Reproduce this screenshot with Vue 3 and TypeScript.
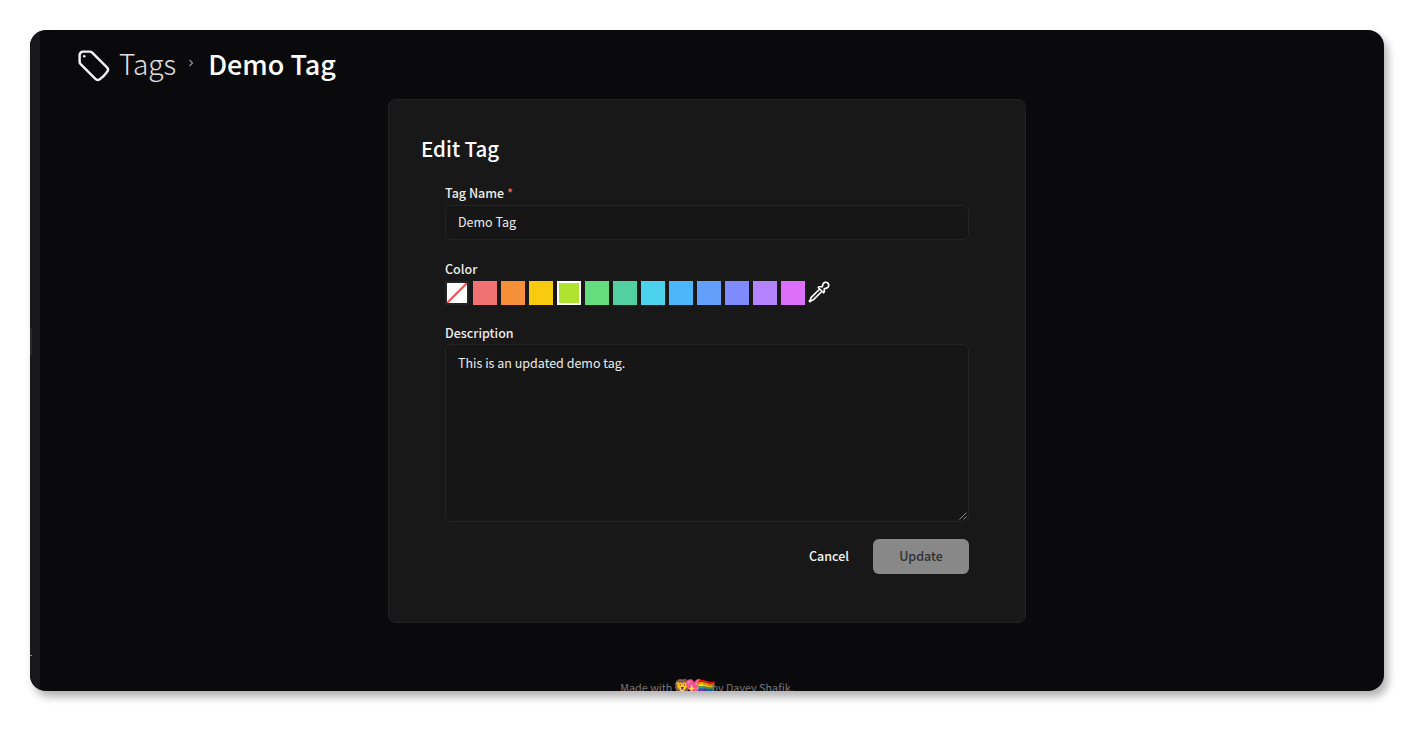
<template>
  <div class="page">
    <div class="window">
      <aside class="rail"></aside>
      <span class="rail-handle"></span>
      <span class="rail-tick"></span>
      <main class="main">
        <header class="crumbs">
          <svg class="tag-icon" viewBox="0 0 24 24" fill="none" stroke="currentColor" stroke-width="1.600" stroke-linecap="round" stroke-linejoin="round">
            <path d="M9.568 3H5.250A2.250 2.250 0 0 0 3 5.250v4.318c0 .597.237 1.170.659 1.591l9.581 9.581c.699.699 1.780.872 2.607.330a18.095 18.095 0 0 0 5.223-5.223c.542-.827.369-1.908-.330-2.607L11.160 3.660A2.250 2.250 0 0 0 9.568 3Z" />
            <path d="M6 6h.008v.008H6V6Z" />
          </svg>
          <span class="crumb-parent">Tags</span>
          <svg class="crumb-sep" viewBox="0 0 8 10" fill="none" stroke="currentColor" stroke-width="1.100">
            <path d="M2.500 2l3 3-3 3" />
          </svg>
          <span class="crumb-current">Demo Tag</span>
        </header>

        <section class="card">
          <h2 class="card-title">Edit Tag</h2>
          <form class="form" @submit.prevent>
            <div class="field name-field">
              <label class="label">Tag Name<span class="req"> *</span></label>
              <div class="input">{{ name }}</div>
            </div>

            <div class="field color-field">
              <label class="label">Color</label>
              <div class="swatches">
                <span class="swatch none">
                  <svg viewBox="0 0 20 20" preserveAspectRatio="none">
                    <rect width="20" height="20" fill="#fff" />
                    <path d="M0 20L20 0" stroke="#ef5050" stroke-width="2" />
                  </svg>
                </span>
                <span
                  v-for="c in colors"
                  :key="c"
                  class="swatch"
                  :class="{ selected: c === selected }"
                  :style="{ background: c }"
                ></span>
                <svg class="dropper" viewBox="0 0 24 24" fill="none" stroke="#fff" stroke-width="1.700" stroke-linecap="round" stroke-linejoin="round">
                  <path d="m15 11.250 1.500 1.500.750-.750V8.758l2.276-.610a3 3 0 1 0-3.675-3.675l-.610 2.277H12l-.750.750 1.500 1.500m2.250 2.250-8.470 8.470c-.340.340-.800.530-1.280.530s-.940.190-1.280.530l-.970.970-.750-.750.970-.970c.340-.340.530-.800.530-1.280s.190-.940.530-1.280L12.750 9M15 11.250 12.750 9" />
                </svg>
              </div>
            </div>

            <div class="field desc-field">
              <label class="label">Description</label>
              <div class="textarea">
                {{ description }}
                <svg class="grip" viewBox="0 0 8 8" stroke="#8a8a8a" stroke-width="1">
                  <path d="M0.500 7.500L7.500 0.500M4.500 7.500L7.500 4.500" />
                </svg>
              </div>
            </div>

            <div class="actions">
              <button type="button" class="cancel">Cancel</button>
              <button type="submit" class="update">Update</button>
            </div>
          </form>
        </section>

        <footer class="foot">
          Made with
          <span class="emoji">🦁💖🏳️‍🌈</span>
          by Davey Shafik.
        </footer>
      </main>
    </div>
  </div>
</template>

<script setup lang="ts">
const name = 'Demo Tag';
const description = 'This is an updated demo tag.';
const selected = '#aee32f';
const colors: string[] = [
  '#f27171',
  '#f59038',
  '#f8cb10',
  '#aee32f',
  '#65dd7f',
  '#53d0a0',
  '#4dd2ee',
  '#4cb6fa',
  '#659ffc',
  '#7f8afc',
  '#b382fd',
  '#dc70fa',
];
</script>

<style>
html,
body {
  margin: 0;
  background: #fff;
}
</style>

<style scoped>
.page {
  box-sizing: border-box;
  width: 1426px;
  height: 733px;
  padding: 30px 42px 42px 30px;
  font-family: "Noto Sans CJK JP", "Noto Sans", sans-serif;
  overflow: hidden;
}

.window {
  position: relative;
  display: flex;
  height: 661px;
  background: #0a0a0c;
  border-radius: 16px;
  overflow: hidden;
  box-shadow: 4px 6px 8px rgba(0, 0, 0, 0.3);
}

.rail {
  flex: none;
  width: 10px;
  background: #18181a;
}

.rail-handle {
  position: absolute;
  left: 0;
  top: 298px;
  width: 2px;
  height: 27px;
  background: #2a2a2c;
}

.rail-tick {
  position: absolute;
  left: 0;
  top: 625px;
  width: 2px;
  height: 1px;
  background: #8a8a8a;
}

.main {
  flex: 1;
  display: flex;
  flex-direction: column;
  min-width: 0;
  padding-right: 10px;
}

.crumbs {
  flex: none;
  display: flex;
  align-items: center;
  height: 69px;
  padding-left: 35px;
  padding-bottom: 3px;
  box-sizing: border-box;
  color: #fff;
}

.tag-icon {
  flex: none;
  width: 37px;
  height: 37px;
  margin-top: 4px;
  color: #f2f2f2;
}

.crumb-parent {
  margin-left: 7px;
  font-size: 28px;
  font-weight: 300;
  color: #e0e0e0;
}

.crumb-sep {
  width: 8px;
  height: 10px;
  margin: 0 13px 0 11px;
  color: #999;
}

.crumb-current {
  font-size: 27px;
  font-weight: 500;
}

.card {
  flex: none;
  box-sizing: border-box;
  align-self: center;
  width: 638px;
  height: 524px;
  padding: 30px 56px 0 32px;
  background: #181818;
  border: 1px solid #232323;
  border-radius: 8px;
  color: #f4f4f4;
}

.card-title {
  margin: 0;
  font-size: 20.500px;
  line-height: 36px;
  font-weight: 500;
  color: #fff;
}

.form {
  padding: 17px 0 0 24px;
}

.field {
  display: flex;
  flex-direction: column;
}

.label {
  margin-bottom: 2px;
  font-size: 12.500px;
  line-height: 20px;
  font-weight: 500;
  color: #ededed;
}

.req {
  color: #ef5f5f;
}

.input,
.textarea {
  box-sizing: border-box;
  position: relative;
  width: 524px;
  padding: 0 12px;
  background: #161616;
  border: 1px solid #242424;
  border-radius: 6px;
  font-size: 12.500px;
  color: #ededed;
}

.input {
  height: 35px;
  line-height: 32px;
}

.color-field {
  margin-top: 19px;
}

.swatches {
  display: flex;
  align-items: center;
  gap: 4px;
  height: 24px;
}

.swatch {
  box-sizing: border-box;
  flex: none;
  width: 24px;
  height: 24px;
  border: 2px solid transparent;
  background-clip: border-box;
}

.swatch.none {
  border-color: #242424;
}

.swatch.none svg {
  display: block;
  width: 100%;
  height: 100%;
}

.swatch.selected {
  border-color: #fff;
}

.dropper {
  flex: none;
  width: 24px;
  height: 24px;
  margin: -3px 0 0 -2px;
}

.desc-field {
  margin-top: 18px;
}

.desc-field .label {
  margin-bottom: 1px;
}

.textarea {
  height: 178px;
  padding-top: 7px;
  line-height: 22px;
}

.grip {
  position: absolute;
  right: 1px;
  bottom: 1px;
  width: 8px;
  height: 8px;
}

.actions {
  display: flex;
  justify-content: flex-end;
  align-items: center;
  gap: 24px;
  width: 524px;
  margin-top: 17px;
}

.cancel,
.update {
  height: 35px;
  padding: 0 0 2px;
  border: none;
  font-family: inherit;
  font-size: 12.500px;
  font-weight: 500;
}

.cancel {
  background: none;
  color: #f4f4f4;
}

.update {
  width: 96px;
  background: #888;
  border-radius: 6px;
  color: #303030;
}

.foot {
  flex: none;
  margin-top: 55px;
  text-align: center;
  font-size: 10.800px;
  line-height: 16px;
  color: #767676;
  white-space: nowrap;
}

.emoji {
  margin-left: -2px;
  font-size: 15px;
  letter-spacing: -7px;
}
</style>
